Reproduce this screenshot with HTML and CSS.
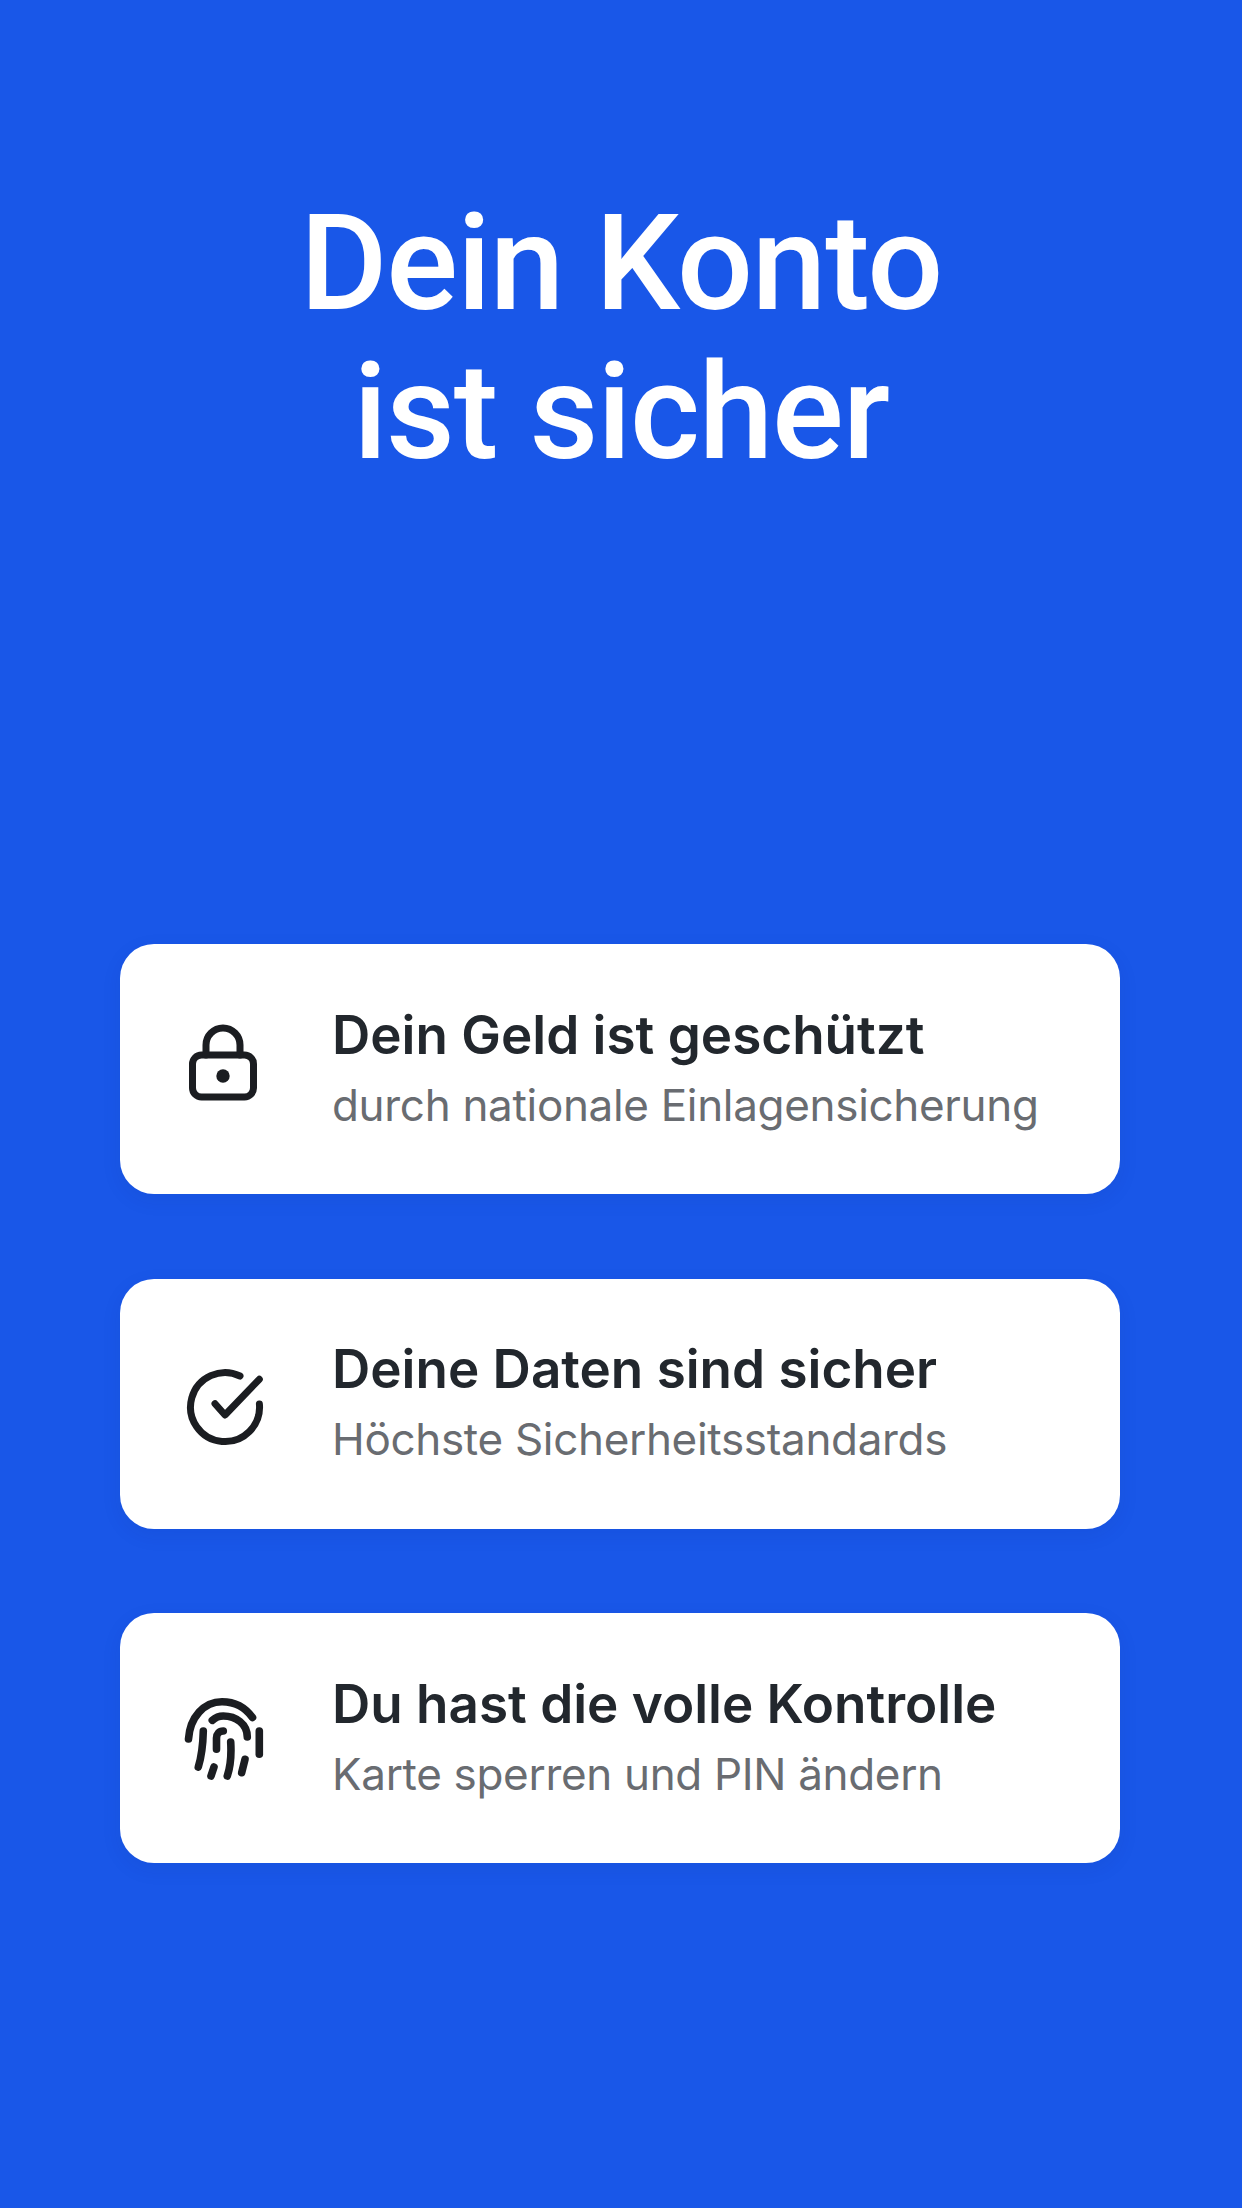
FILE: index.html
```html
<!DOCTYPE html>
<html lang="de">
<head>
<meta charset="utf-8">
<title>Dein Konto ist sicher</title>
<link rel="stylesheet" href="styles.css">
</head>
<body>
<main class="screen">
  <h1 class="headline">Dein Konto<br>ist sicher</h1>
  <section class="cards">
    <article class="card">
      <svg class="icon" viewBox="0 0 90 90" aria-hidden="true">
        <rect x="12.5" y="31" width="61" height="42" rx="9"/>
        <path d="M26 31V21a17 17 0 0 1 34 0V31"/>
        <circle class="dot" cx="43" cy="52" r="6.7"/>
      </svg>
      <div class="copy">
        <h2 class="title">Dein Geld ist geschützt</h2>
        <p class="sub">durch nationale Einlagensicherung</p>
      </div>
    </article>
    <article class="card">
      <svg class="icon" viewBox="0 0 90 90" aria-hidden="true">
        <path d="M60 17A34.5 34.5 0 1 0 79.4 45"/>
        <path d="M35 44.7L45 56L79.3 20.3"/>
      </svg>
      <div class="copy">
        <h2 class="title">Deine Daten sind sicher</h2>
        <p class="sub">Höchste Sicherheitsstandards</p>
      </div>
    </article>
    <article class="card">
      <svg class="icon icon-bold" viewBox="0 0 90 90" aria-hidden="true">
        <path d="M8.5 46C10 24 24 8.7 42 8.7C54 8.7 65 14 72.5 24.5"/>
        <path d="M32.3 27.3C36 24 40 23 43.3 23C56 23 67.3 31 67.3 44"/>
        <path d="M79.3 38V61.3"/>
        <path d="M65 66.3L61.7 79.7"/>
        <path d="M23.3 38C23 50 22 62 18.3 74"/>
        <path d="M43.3 38C39 38 36.5 41 36.5 45V56.3"/>
        <path d="M50.7 49C51.5 62 51 72 47.3 83"/>
        <path d="M34 74L31 83"/>
      </svg>
      <div class="copy">
        <h2 class="title">Du hast die volle Kontrolle</h2>
        <p class="sub">Karte sperren und PIN ändern</p>
      </div>
    </article>
  </section>
</main>
</body>
</html>
```
FILE: styles.css
```css
* { box-sizing: border-box; }
html, body { margin: 0; padding: 0; }
body { background: #1957e8; }
.screen {
  width: 1242px;
  height: 2208px;
  display: flex;
  flex-direction: column;
  align-items: center;
  padding-top: 189px;
  overflow: hidden;
}
.headline {
  margin: 0;
  color: #fff;
  font-family: Roboto, sans-serif;
  font-weight: 500;
  font-size: 134px;
  line-height: 149px;
  letter-spacing: -1.2px;
  text-align: center;
}
.cards {
  align-self: flex-start;
  margin: 457px 0 0 120px;
  display: flex;
  flex-direction: column;
  gap: 84.5px;
}
.card {
  width: 1000px;
  height: 250px;
  padding-left: 60px;
  display: flex;
  align-items: center;
  gap: 62px;
  background: #fff;
  border-radius: 34px;
  box-shadow: 0 6px 20px rgba(10, 40, 120, 0.08);
}
.icon {
  width: 90px;
  height: 90px;
  flex: none;
  fill: none;
  stroke: #1b1d21;
  stroke-width: 7;
  stroke-linecap: round;
  stroke-linejoin: round;
}
.icon-bold { stroke-width: 7.6; }
.icon .dot { fill: #1b1d21; stroke: none; }
.copy { font-family: Inter, sans-serif; padding-bottom: 4px; }
.title {
  margin: 0;
  color: #22272d;
  font-weight: 600;
  font-size: 53px;
  line-height: 64px;
}
.sub {
  margin: 11px 0 0;
  color: #696c71;
  font-weight: 400;
  font-size: 44px;
  line-height: 54px;
  letter-spacing: -0.32px;
}
```
